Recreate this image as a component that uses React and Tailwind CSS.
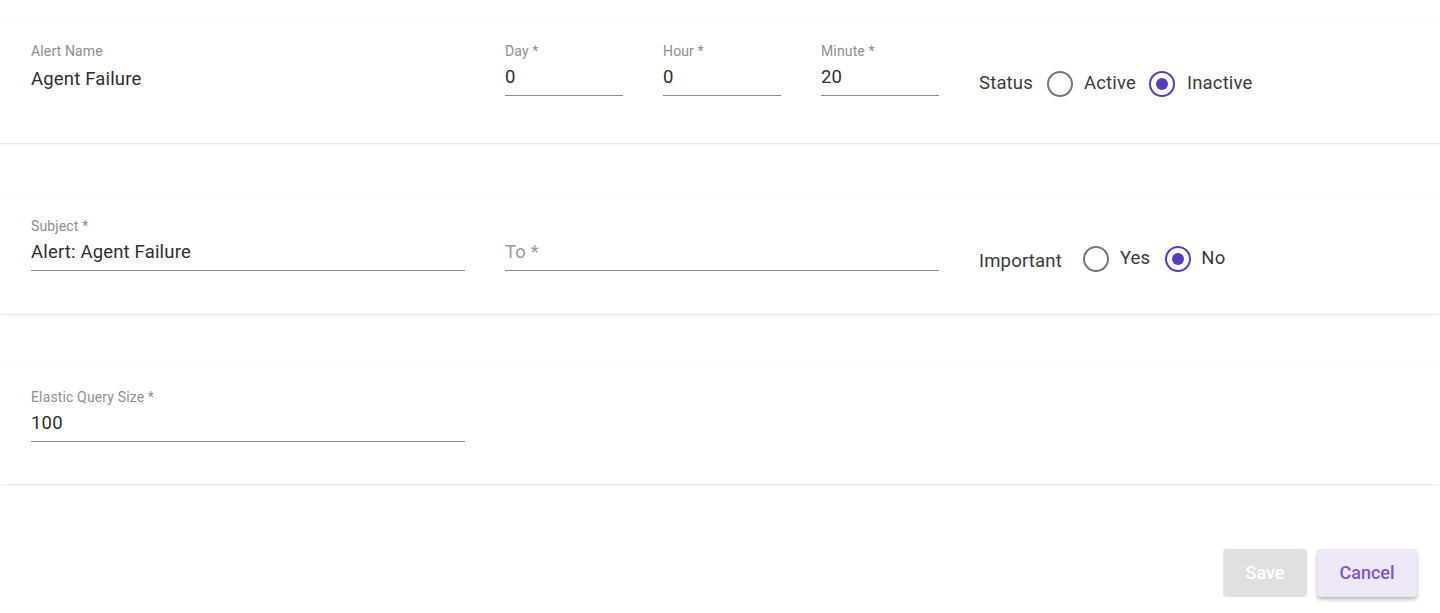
import { useState } from "react"

const font = { fontFamily: "Roboto, 'Liberation Sans', sans-serif" }

function Field({ label, value, placeholder, underline = true, className = "" }) {
  return (
    <div className={`pt-[20px] ${className}`}>
      {placeholder ? (
        <div className="h-4" />
      ) : (
        <div className="h-4 pt-px text-[14px] leading-4 tracking-[0.01em] text-[#8e8e8e]">{label}</div>
      )}
      <div
        className={`pt-[7px] pb-[6px] ${underline ? "border-b border-[#8a8a8a]" : "pt-[9px]"}`}
      >
        <div className={`h-6 text-[18.5px] leading-6 tracking-[0.00938em] ${placeholder ? "text-[#9a9a9a]" : "text-[#2e2e2e]"}`}>
          {placeholder || value}
        </div>
      </div>
    </div>
  )
}

function Radio({ checked, onClick }) {
  return (
    <button
      onClick={onClick}
      className={`w-[26px] h-[26px] rounded-full border-2 flex items-center justify-center shrink-0 ${
        checked ? "border-[#5b3bbd]" : "border-[#777777]"
      }`}
    >
      {checked && <span className="w-[12px] h-[12px] rounded-full bg-[#5b3bbd]" />}
    </button>
  )
}

function Card({ className = "", children }) {
  return (
    <div className={`bg-white shadow-[0_1px_3px_rgba(0,0,0,0.08),0_1px_1px_rgba(0,0,0,0.04)] ${className}`}>
      <div className="grid grid-cols-[434px_434px_434px] gap-x-10 pl-[31px]">{children}</div>
    </div>
  )
}

export default function App() {
  const [status, setStatus] = useState("inactive")
  const [important, setImportant] = useState("no")

  return (
    <div style={font} className="bg-white min-h-[613px] pt-[22px]">
      <Card className="h-[121px]">
        <Field label="Alert Name" value="Agent Failure" underline={false} />
        <div className="grid grid-cols-3 gap-x-10">
          <Field label="Day *" value="0" />
          <Field label="Hour *" value="0" />
          <Field label="Minute *" value="20" />
        </div>
        <div className="pt-[48px] flex items-center text-[18.5px] tracking-[0.00938em] text-[#3a3a3a]">
          <span>Status</span>
          <span className="ml-[14px]"><Radio checked={status === "active"} onClick={() => setStatus("active")} /></span>
          <span className="ml-[11px]">Active</span>
          <span className="ml-[13px]"><Radio checked={status === "inactive"} onClick={() => setStatus("inactive")} /></span>
          <span className="ml-[12px]">Inactive</span>
        </div>
      </Card>

      <Card className="h-[117px] mt-[54px]">
        <Field label="Subject *" value="Alert: Agent Failure" />
        <Field placeholder="To *" />
        <div className="pt-[45px] flex items-center text-[18.5px] tracking-[0.00938em] text-[#3a3a3a]">
          <span className="mt-[6px]">Important</span>
          <span className="ml-[21px]"><Radio checked={important === "yes"} onClick={() => setImportant("yes")} /></span>
          <span className="ml-[11px]">Yes</span>
          <span className="ml-[15px]"><Radio checked={important === "no"} onClick={() => setImportant("no")} /></span>
          <span className="ml-[10px]">No</span>
        </div>
      </Card>

      <Card className="h-[116px] mt-[54px]">
        <Field label="Elastic Query Size *" value="100" />
      </Card>

      <div className="flex justify-end gap-[10px] pr-[23px] mt-[65px]">
        <button disabled className="w-[84px] h-[48px] pb-[2px] rounded bg-[#e0e0e0] text-white text-[18px] font-medium">
          Save
        </button>
        <button className="w-[100px] h-[48px] pb-[2px] rounded bg-[#ede7f6] text-[#7e57c2] text-[18px] font-medium shadow-[0_3px_4px_rgba(0,0,0,0.2),0_1px_2px_rgba(0,0,0,0.12)]">
          Cancel
        </button>
      </div>
    </div>
  )
}
